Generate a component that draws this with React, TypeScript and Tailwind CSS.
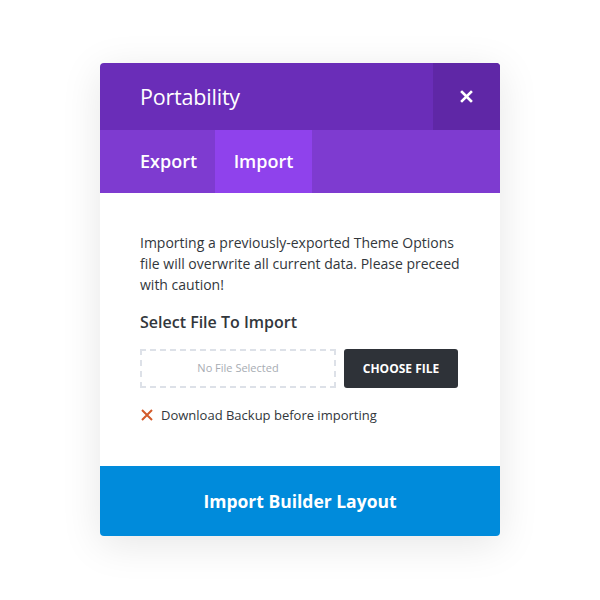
import React from "react";

export default function App() {
  return (
    <div className="w-[600px] h-[600px] bg-white flex justify-center" style={{ fontFamily: '"Open Sans", sans-serif' }}>
      <div className="mt-[63px] w-[400px] h-[473px] flex flex-col rounded-[4px] overflow-hidden shadow-[0_8px_40px_rgba(0,0,0,0.10)]">
        <div className="h-[67px] flex bg-[#6a2db8]">
          <div className="flex-1 flex items-center pl-10 pt-[1px] text-white text-[21.5px] font-normal tracking-[-0.2px]">Portability</div>
          <div className="w-[67px] flex items-center justify-center bg-[#5f27a6]">
            <svg width="13" height="13" viewBox="0 0 13 13">
              <path d="M2 2 L11 11 M11 2 L2 11" stroke="white" strokeWidth="2.6" strokeLinecap="square" />
            </svg>
          </div>
        </div>
        <div className="h-[63px] flex bg-[#7e3bd0] text-white text-[18px] font-semibold">
          <div className="w-[115px] flex items-center pl-10">Export</div>
          <div className="w-[97px] flex items-center justify-center bg-[#8f42ec]">Import</div>
        </div>
        <div className="flex-1 bg-white px-10 pt-[39px] text-[#32373c]">
          <p className="text-[14px] leading-[21px] -mr-1">
            Importing a previously-exported Theme Options file will overwrite all current data. Please preceed with caution!
          </p>
          <h3 className="mt-[15px] text-[16px] leading-[24px] font-semibold">Select File To Import</h3>
          <div className="mt-[15px] flex gap-2 h-[39px]">
            <div className="w-[196px] border-2 border-dashed border-[#dde1e8] flex items-center justify-center text-[11px] text-[#a7acb3]">
              No File Selected
            </div>
            <div className="w-[114px] rounded-[3px] bg-[#2e3238] flex items-center justify-center text-white text-[12px] font-bold">
              CHOOSE FILE
            </div>
          </div>
          <div className="mt-[18px] flex items-center gap-[8px] text-[13px] leading-[18px]">
            <svg width="12" height="12" viewBox="0 0 12 12" className="ml-[1px]">
              <path d="M1 1 L11 11 M11 1 L1 11" stroke="#d35a2a" strokeWidth="2" />
            </svg>
            <span>Download Backup before importing</span>
          </div>
        </div>
        <div className="h-[70px] bg-[#008bdb] flex items-center justify-center text-white text-[17.5px] font-bold">
          Import Builder Layout
        </div>
      </div>
    </div>
  );
}
